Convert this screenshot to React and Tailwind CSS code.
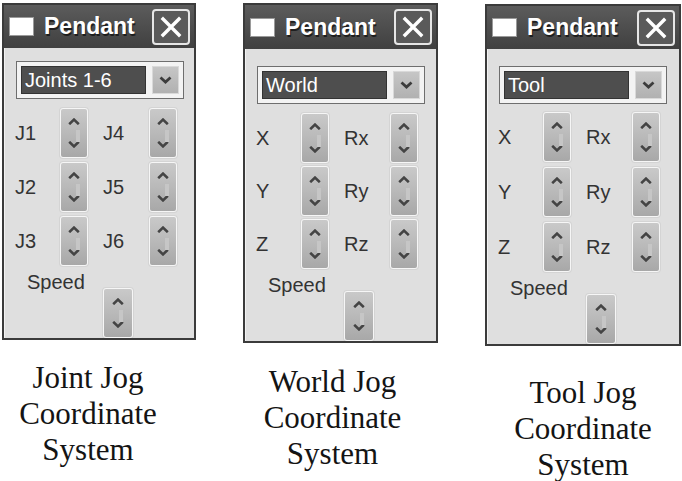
import React from "react";

const Chevron = ({ dir = "up" }) => (
  <svg width="12" height="7" viewBox="0 0 12 7" className="block shrink-0 w-[12px] h-[7px]">
    {dir === "up" ? (
      <path d="M1.2 6.2 L6 1.6 L10.8 6.2" fill="none" stroke="#444" strokeWidth="2.6" />
    ) : (
      <path d="M1.2 0.8 L6 5.4 L10.8 0.8" fill="none" stroke="#444" strokeWidth="2.6" />
    )}
  </svg>
);

const Spinner = ({ wide }) => (
  <div
    className={
      (wide ? "w-[30px] " : "w-[28px] ") +
      "h-[50px] shrink-0 relative rounded-[3px] border border-[#f6f6f6] bg-gradient-to-b from-[#c9c9c9] via-[#b9b9b9] to-[#a8a8a8] flex flex-col items-center justify-between pt-[9px] pb-[9px] shadow-[0_0_0_1px_#d4d4d4]"
    }
  >
    <Chevron dir="up" />
    <div className="absolute left-[15px] top-[21px] w-[4px] h-[12px] bg-[#c6c6c6]" />
    <Chevron dir="down" />
  </div>
);

const Row = ({ a, b }) => (
  <div className="flex items-center h-[50px]">
    <div className="w-[45px] text-[20px] leading-none text-[#333]">{a}</div>
    <Spinner />
    <div className="w-[15px]" />
    <div className="w-[46px] text-[20px] leading-none text-[#333]">{b}</div>
    <Spinner />
  </div>
);

const Pendant = ({ mode, rows, cls, titleCls, dropCls, gridCls }) => (
  <div className={"border-2 border-[#3b3b3b] flex flex-col overflow-hidden bg-[#dfdfdf] " + cls}>
    <div className={"flex items-center bg-gradient-to-b from-[#5c5c5c] to-[#404040] " + titleCls}>
      <div className="ml-[5px] w-[25px] h-[19px] bg-white border border-[#9a9a9a]" />
      <div className="ml-[10px] text-[23px] font-bold text-white leading-none [text-shadow:1px_2px_0_#1e1e1e]">
        Pendant
      </div>
      <div className="ml-auto mr-[4px] w-[38px] h-[36px] rounded-[4px] border-2 border-[#e6e6e6] bg-[#5a5a5a] flex items-center justify-center">
        <svg width="22" height="22" viewBox="0 0 22 22">
          <path d="M3 3 L19 19 M19 3 L3 19" stroke="white" strokeWidth="3.4" strokeLinecap="square" />
        </svg>
      </div>
    </div>
    <div className="flex-1 flex flex-col border-l border-[#f2f2f2]">
      <div className={"ml-[11px] w-[168px] h-[38px] border border-[#6e6e6e] bg-[#f3f3f3] p-[4px] flex gap-[6px] " + dropCls}>
        <div className="flex-1 bg-[#4e4e4e] border border-[#333] flex items-center pl-[3px] text-white text-[20px] leading-none">
          {mode}
        </div>
        <div className="w-[27px] bg-gradient-to-b from-[#c6c6c6] to-[#b1b1b1] border border-[#d9d9d9] flex items-center justify-center">
          <svg width="13" height="8" viewBox="0 0 13 8" className="block w-[13px] h-[8px]">
            <path d="M1.5 1.5 L6.5 6 L11.5 1.5" fill="none" stroke="#3c3c3c" strokeWidth="2.8" />
          </svg>
        </div>
      </div>
      <div className={"pl-[10px] flex flex-col " + gridCls}>
        {rows.map((r) => (
          <Row key={r[0]} a={r[0]} b={r[1]} />
        ))}
      </div>
      <div className="pl-[22px] mt-[5px] text-[20px] leading-[22px] text-[#333]">Speed</div>
      <div className="pl-[98px] -mt-[5px]">
        <Spinner wide />
      </div>
    </div>
  </div>
);

const Caption = ({ lines, cls }) => (
  <div
    className={"text-center text-[31px] leading-[36px] text-[#141414] " + cls}
    style={{ fontFamily: '"Liberation Serif", "Times New Roman", serif' }}
  >
    {lines.map((l) => (
      <div key={l}>{l}</div>
    ))}
  </div>
);

export default function App() {
  return (
    <div
      className="w-[682px] h-[481px] bg-white flex items-start pl-[2px] overflow-hidden"
      style={{ fontFamily: '"Liberation Sans", Arial, sans-serif' }}
    >
      <div className="flex flex-col w-[194px] mt-[3px]">
        <Pendant
          mode="Joints 1-6"
          rows={[["J1", "J4"], ["J2", "J5"], ["J3", "J6"]]}
          cls="h-[337px]"
          titleCls="h-[45px]"
          dropCls="mt-[13px]"
          gridCls="mt-[9px] gap-[4px]"
        />
        <Caption lines={["Joint Jog", "Coordinate", "System"]} cls="mt-[20px] pr-[22px]" />
      </div>
      <div className="flex flex-col w-[195px] ml-[47px] mt-[3px]">
        <Pendant
          mode="World"
          rows={[["X", "Rx"], ["Y", "Ry"], ["Z", "Rz"]]}
          cls="h-[340px]"
          titleCls="h-[46px]"
          dropCls="mt-[17px]"
          gridCls="mt-[9px] gap-[3px]"
        />
        <Caption lines={["World Jog", "Coordinate", "System"]} cls="mt-[21px] pr-[16px]" />
      </div>
      <div className="flex flex-col w-[196px] ml-[47px] mt-[4px]">
        <Pendant
          mode="Tool"
          rows={[["X", "Rx"], ["Y", "Ry"], ["Z", "Rz"]]}
          cls="h-[342px]"
          titleCls="h-[47px]"
          dropCls="mt-[17px]"
          gridCls="mt-[8px] gap-[5px]"
        />
        <Caption lines={["Tool Jog", "Coordinate", "System"]} cls="mt-[29px]" />
      </div>
    </div>
  );
}
